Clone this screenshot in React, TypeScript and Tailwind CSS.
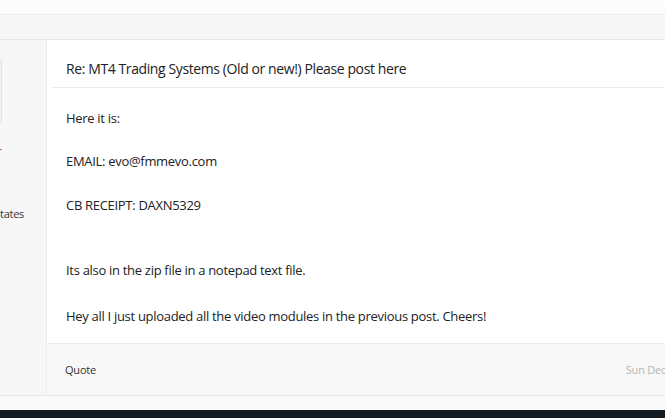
import React from 'react';

const lines = [
  { text: 'Here it is:', gap: 'mt-0' },
  { text: 'EMAIL: evo@fmmevo.com', gap: 'mt-[25px]' },
  { text: 'CB RECEIPT: DAXN5329', gap: 'mt-[26px]' },
  { text: 'Its also in the zip file in a notepad text file.', gap: 'mt-[47px]' },
  { text: 'Hey all I just uploaded all the video modules in the previous post. Cheers!', gap: 'mt-[28px]' },
];

const App: React.FC = () => {
  return (
    <div className="w-[665px] h-[418px] overflow-hidden bg-[#fafafa] flex flex-col" style={{ fontFamily: '"Open Sans", "Noto Sans", sans-serif' }}>
      <div className="h-[15px] bg-[#fcfcfc] border-b border-[#ececec] shrink-0" />
      <div className="h-[25px] bg-[#f6f6f6] border-b border-[#e6e6e6] shrink-0" />

      <div className="flex h-[356px] shrink-0 border-b border-[#e8e8e8]">
        {/* user column, mostly off-screen */}
        <div className="w-[46px] shrink-0 bg-[#f7f7f7] overflow-hidden flex justify-end">
          <div className="w-[160px] shrink-0 flex flex-col items-end pr-[44px]">
            <div className="mt-[18px] w-[100px] h-[67px] bg-[#f0f0f0] border border-[#e3e3e3] rounded-sm" />
            <div className="mt-[20px] text-[11px] text-[#c0392b] leading-none">rr</div>
            <div className="mt-[52px] text-[11px] text-[#333] leading-none tracking-[-0.3px] -mr-[22px]">United States</div>
          </div>
        </div>

        {/* post */}
        <div className="flex-1 flex flex-col border-l border-[#ececec]">
          <div className="flex-1 bg-white pl-[5px]">
            <div className="pt-[19px] pb-[8px] pl-[14px] border-b border-[#ececec] text-[14px] text-[#222] leading-[20px] tracking-[-0.4px]">
              Re: MT4 Trading Systems (Old or new!) Please post here
            </div>
            <div className="pl-[14px] pt-[21px] text-[13px] text-[#222] leading-[18px] tracking-[-0.3px]">
              {lines.map((l) => (
                <p key={l.text} className={l.gap}>{l.text}</p>
              ))}
            </div>
          </div>
          <div className="h-[52px] shrink-0 bg-[#f8f8f8] border-t border-[#ececec] flex items-center justify-between pl-[18px] -mr-[16px] text-[11px] leading-none tracking-[-0.2px]">
            <span className="text-[#333]">Quote</span>
            <span className="text-[#b5b5b5]">Sun Dec 23</span>
          </div>
        </div>
      </div>

      <div className="flex-1 bg-[#fafafa]" />
      <div className="h-[8px] bg-[#141c24] shrink-0" />
    </div>
  );
};

export default App;
